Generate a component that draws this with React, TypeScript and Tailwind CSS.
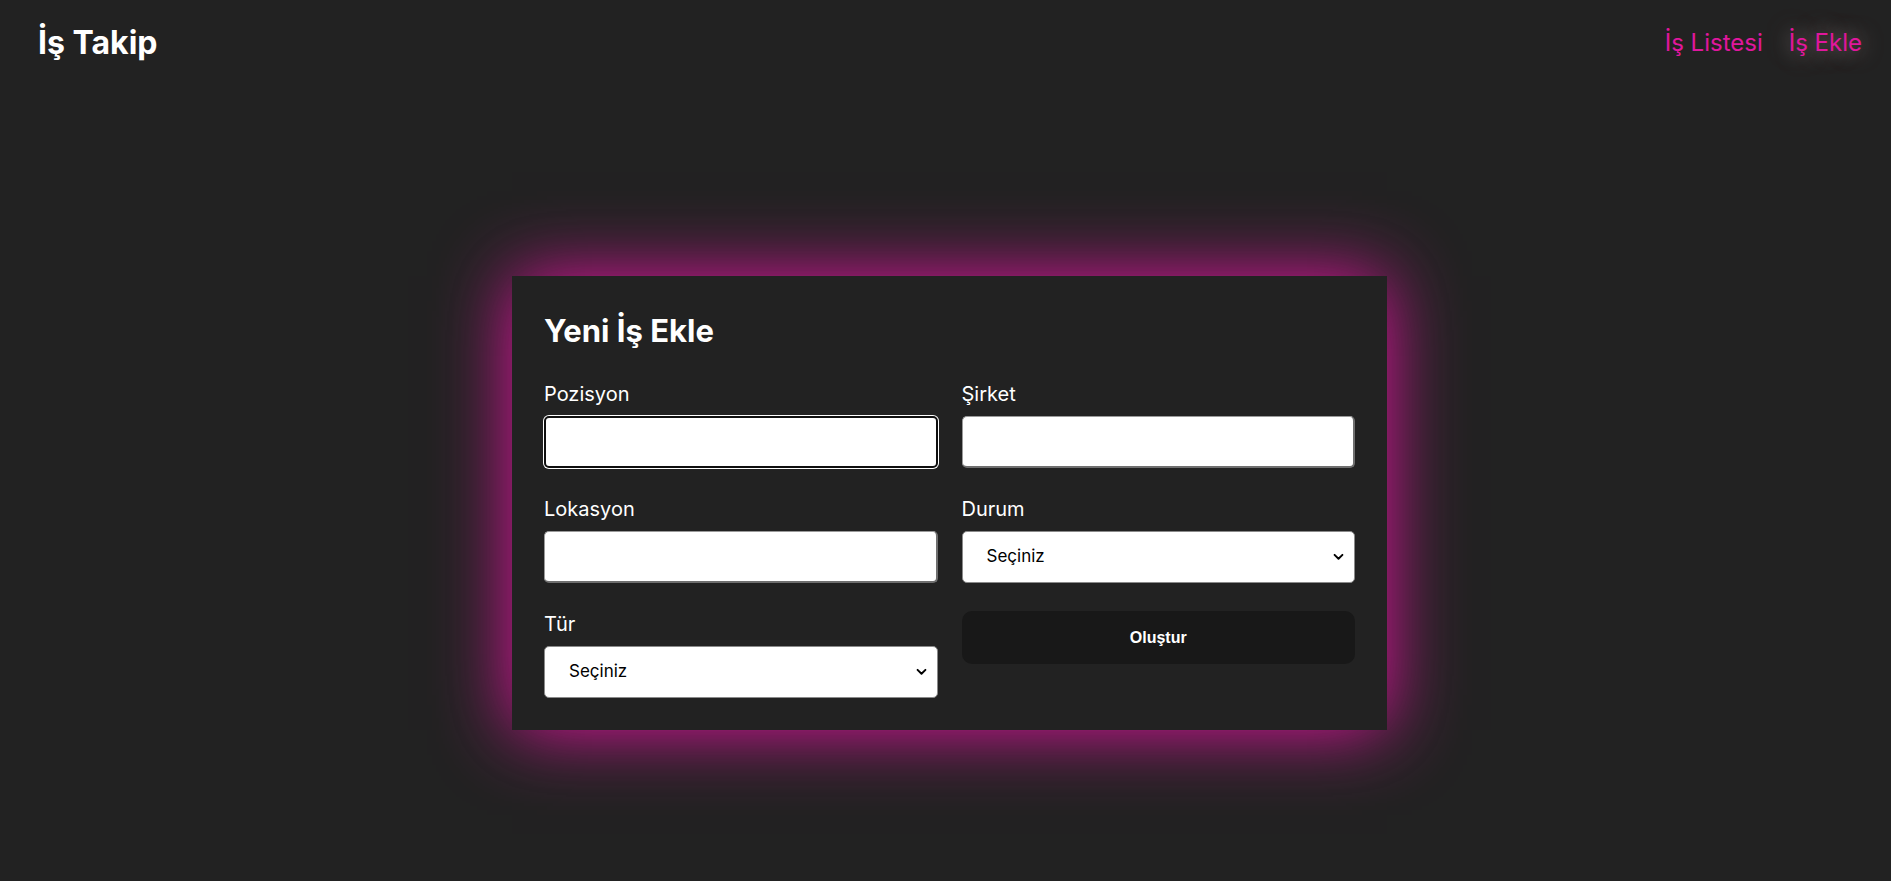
import React from 'react';

const font = { fontFamily: 'Inter, "Open Sans", sans-serif' };

function Chevron() {
  return (
    <svg viewBox="0 0 12 8" className="pointer-events-none absolute right-[11px] top-1/2 h-[7px] w-[11px] -translate-y-1/2" fill="none" stroke="black" strokeWidth={2.2} strokeLinecap="round" strokeLinejoin="round">
      <path d="M1.5 1.5 6 6l4.5-4.5" />
    </svg>
  );
}

function Field({ label, children }: { label: string; children: React.ReactNode }) {
  return (
    <div className="flex flex-col">
      <label className="mb-2 text-[20px] leading-[27px] text-white">{label}</label>
      {children}
    </div>
  );
}

function TextInput({ focused }: { focused?: boolean }) {
  return (
    <input
      type="text"
      className={
        focused
          ? 'h-[52px] w-full rounded-[5px] border-2 border-[#101010] bg-white px-3 outline-none shadow-[0_0_0_1px_#ffffff]'
          : 'h-[52px] w-full rounded-[5px] border-t border-l border-b-2 border-r-2 border-t-[#9a9a9a] border-l-[#9a9a9a] border-b-[#6f6f6f] border-r-[#6f6f6f] bg-white px-3 outline-none'
      }
    />
  );
}

function Select() {
  return (
    <div className="relative">
      <select className="h-[52px] w-full appearance-none rounded-[5px] border border-[#8a8a8a] bg-white pl-[24px] text-[17px] text-black outline-none">
        <option>Seçiniz</option>
      </select>
      <Chevron />
    </div>
  );
}

export default function App() {
  return (
    <div className="min-h-screen bg-[#222222]" style={font}>
      <header className="flex h-[86px] items-center justify-between pl-[38px] pr-[29px]">
        <h1 className="text-[32px] font-bold leading-none text-white">İş Takip</h1>
        <nav className="flex items-center gap-[26px] text-[24px] text-[#e0179d]">
          <a href="#">İş Listesi</a>
          <a href="#" className="[text-shadow:0_0_22px_rgba(255,230,230,0.55)]">İş Ekle</a>
        </nav>
      </header>

      <main className="flex justify-center pt-[190px] pl-2">
        <form className="w-[875px] bg-[#222222] p-8 shadow-[0_0_70px_rgb(226,20,160)]">
          <h2 className="mb-[28px] text-[31px] font-bold leading-[45px] text-white">Yeni İş Ekle</h2>
          <div className="grid grid-cols-2 items-start gap-x-6 gap-y-7">
            <Field label="Pozisyon">
              <TextInput focused />
            </Field>
            <Field label="Şirket">
              <TextInput />
            </Field>
            <Field label="Lokasyon">
              <TextInput />
            </Field>
            <Field label="Durum">
              <Select />
            </Field>
            <Field label="Tür">
              <Select />
            </Field>
            <button
              type="button"
              className="h-[53px] w-full rounded-[10px] bg-[#181818] text-[16px] font-bold text-white"
              style={{ fontFamily: '"Liberation Sans", Arial, sans-serif' }}
            >
              Oluştur
            </button>
          </div>
        </form>
      </main>
    </div>
  );
}
